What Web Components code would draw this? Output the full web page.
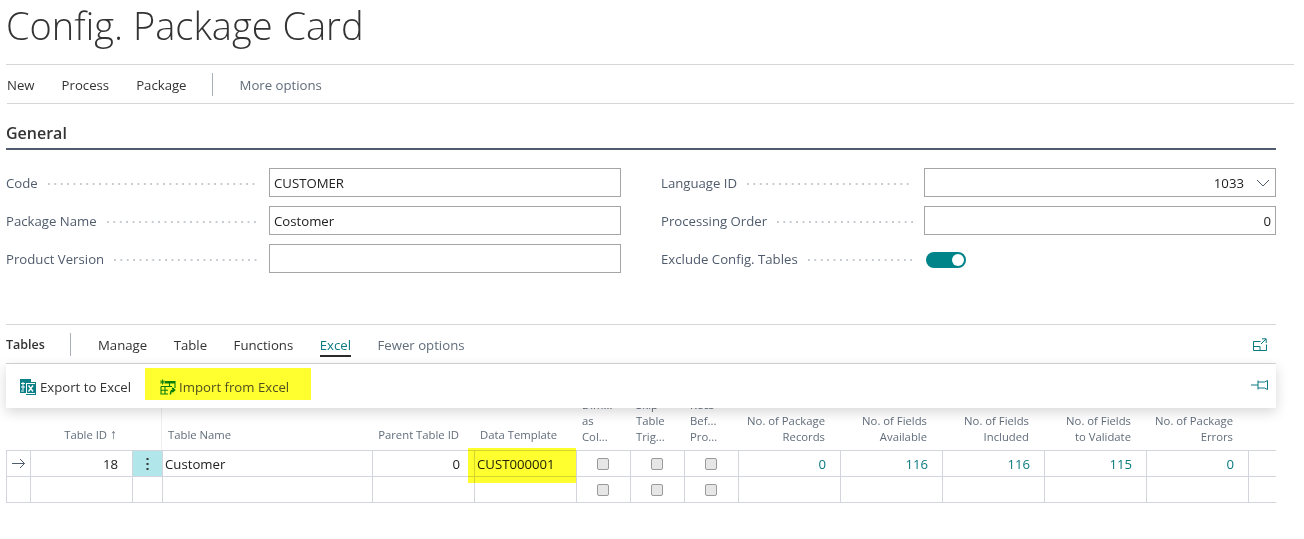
<!DOCTYPE html>
<html>
<head>
<meta charset="utf-8">
<title>Config. Package Card</title>
<style>
html, body { margin: 0; background: #fff; }
body { font-family: "Open Sans", "Liberation Sans", sans-serif; font-size: 13.2px; color: #212121; overflow: hidden; }
</style>
</head>
<body>
<pkg-title>Config. Package Card</pkg-title>
<action-bar>
    <span>New</span><span>Process</span><span class="end">Package</span><i></i><span class="more">More options</span>
</action-bar>
<general-section></general-section>
<tables-part></tables-part>

<script>
class PkgTitle extends HTMLElement {
    constructor() {
        super();
        this.shadow = this.attachShadow({mode:'open'});
        this.shadow.innerHTML = `
        <style>
            :host { display: block; height: 64px; margin: 0 10px 0 6px; border-bottom: 1px solid #d6d6da; }
            div { font-size: 38px; font-weight: 300; line-height: 51px; color: #333; }
        </style>
        <div><slot></slot></div>`;
    }
}

class ActionBar extends HTMLElement {
    constructor() {
        super();
        this.shadow = this.attachShadow({mode:'open'});
        this.shadow.innerHTML = `
        <style>
            :host { display: flex; align-items: center; height: 38px; margin: 0 10px 0 7px; border-bottom: 1px solid #d6d6da; color: #333; }
            ::slotted(span) { margin: 2px 27px 0 0; }
            ::slotted(.end) { margin-right: 25px; }
            ::slotted(i) { width: 1px; height: 23px; background: #a9b0ba; margin-right: 27px; }
            ::slotted(.more) { color: #616d7b; }
        </style>
        <slot></slot>`;
    }
}

class FieldRow extends HTMLElement {
    constructor() {
        super();
        this.shadow = this.attachShadow({mode:'open'});
        this.shadow.innerHTML = `
        <style>
            :host { display: flex; align-items: center; height: 29px; color: #505c6d; }
            .label { width: 263px; flex: none; display: flex; align-items: center; padding-right: 11px; box-sizing: border-box; white-space: nowrap; }
            .dots { flex: 1; height: 2px; margin: 2px 0 0 10px; background: radial-gradient(circle at 1px 1px, #c4c9cf 0.8px, transparent 1px) 0 0 / 6.4px 2px repeat-x; }
            .ctl { width: 352px; flex: none; }
        </style>
        <div class="label"><span>${this.getAttribute("label")}</span><div class="dots"></div></div>
        <div class="ctl"><slot></slot></div>`;
    }
}

class TextBox extends HTMLElement {
    constructor() {
        super();
        this.shadow = this.attachShadow({mode:'open'});
        let chevron = this.hasAttribute("select") ? `<svg width="14" height="8" viewBox="0 0 14 8"><path d="M1 1l6 6 6-6" fill="none" stroke="#505c6d" stroke-width="1"/></svg>` : "";
        this.shadow.innerHTML = `
        <style>
            :host { display: flex; align-items: center; gap: 12px; box-sizing: border-box; height: 29px; border: 1px solid #a5a5a5; padding: 0 4px; color: #212121; }
            :host([num]) { justify-content: flex-end; }
            :host([select]) { padding-right: 5px; }
        </style>
        <span><slot></slot></span>${chevron}`;
    }
}

class ToggleSwitch extends HTMLElement {
    constructor() {
        super();
        this.shadow = this.attachShadow({mode:'open'});
        this.shadow.innerHTML = `
        <style>
            :host { display: flex; justify-content: flex-end; align-items: center; box-sizing: border-box; width: 40px; height: 16px; margin: 2px 0 0 2px; border-radius: 8px; background: #00848a; padding-right: 2px; }
            div { width: 12px; height: 12px; border-radius: 50%; background: #fff; }
        </style>
        <div></div>`;
    }
}

class GeneralSection extends HTMLElement {
    constructor() {
        super();
        this.shadow = this.attachShadow({mode:'open'});
        this.shadow.innerHTML = `
        <style>
            :host { display: block; margin: 0 28px 0 6px; height: 220px; }
            h2 { margin: 0; height: 46px; box-sizing: border-box; border-bottom: 2px solid #505c6d; font-size: 16px; font-weight: 600; line-height: 58px; color: #333; }
            .cols { display: grid; grid-template-columns: 615px 615px; column-gap: 40px; row-gap: 9px; margin-top: 18px; }
        </style>
        <h2>General</h2>
        <div class="cols">
            <field-row label="Code"><text-box>CUSTOMER</text-box></field-row>
            <field-row label="Language ID"><text-box num select>1033</text-box></field-row>
            <field-row label="Package Name"><text-box>Costomer</text-box></field-row>
            <field-row label="Processing Order"><text-box num>0</text-box></field-row>
            <field-row label="Product Version"><text-box></text-box></field-row>
            <field-row label="Exclude Config. Tables"><toggle-switch></toggle-switch></field-row>
        </div>`;
    }
}

class GridRow extends HTMLElement {
    constructor() {
        super();
        this.shadow = this.attachShadow({mode:'open'});
        this.shadow.innerHTML = `
        <style>
            :host { display: grid; grid-template-columns: var(--cols); height: 26px; box-sizing: border-box; border-bottom: 1px solid #d3d5dc; border-left: 1px solid #d3d5dc; margin-left: -1px; }
            ::slotted(*) { box-sizing: border-box; border-right: 1px solid #d3d5dc; display: flex; align-items: center; padding: 0 4px 0 2px; min-width: 0; position: relative; }
            ::slotted(.num) { justify-content: flex-end; padding-right: 14px; }
            ::slotted(.link) { justify-content: flex-end; padding-right: 14px; color: #0b7a80; }
            ::slotted(.chk) { justify-content: center; padding: 0 2px 0 0; }
            ::slotted(.dots) { justify-content: center; background: #b1e6ea; padding: 0; }
            ::slotted(.last) { border-right: 0; }
            ::slotted(.mark) { padding-left: 4px; }
        </style>
        <slot></slot>`;
    }
}

class CheckBox extends HTMLElement {
    constructor() {
        super();
        this.shadow = this.attachShadow({mode:'open'});
        this.shadow.innerHTML = `
        <style>
            :host { display: block; box-sizing: border-box; width: 12px; height: 12px; border: 1px solid #9a9a9a; border-radius: 2px; background: #e6e6e6; }
        </style>`;
    }
}

class PkgGrid extends HTMLElement {
    constructor() {
        super();
        this.shadow = this.attachShadow({mode:'open'});
        this.shadow.innerHTML = `
        <style>
            :host { display: block; --cols: 24px 102px 30px 210px 102px 102px 54px 54px 54px 102px 102px 102px 102px 102px 28px; color: #212121; }
            .head { display: grid; grid-template-columns: var(--cols); grid-template-rows: 42px; height: 43px; overflow: hidden; border-bottom: 1px solid #d3d5dc; box-sizing: border-box; color: #616d7b; font-size: 11.3px; line-height: 16px; }
            .head div { display: flex; flex-direction: column; justify-content: flex-end; padding: 0 12px 5px 6px; box-sizing: border-box; white-space: nowrap; min-width: 0; height: 42px; }
            .head .r { align-items: flex-end; text-align: right; padding-right: 15px; padding-left: 0; }
            .head .one { padding-bottom: 7px; }
            .head .narrow { padding-left: 6px; padding-right: 0; }
            .head b { font-weight: 400; font-size: 14px; line-height: 14px; }
            .glow { position: absolute; top: -3px; left: 461px; width: 108px; height: 35px; background: #ffff30; mix-blend-mode: multiply; z-index: 1; pointer-events: none; }
        </style>
        <div class="head">
            <div></div>
            <div class="r one"><span>Table ID <b>↑</b></span></div>
            <div style="border-right:1px solid #eceef0"></div>
            <div class="one">Table Name</div>
            <div class="r one">Parent Table ID</div>
            <div class="one">Data Template</div>
            <div class="narrow"><span>Dim...</span><span>as</span><span>Col...</span></div>
            <div class="narrow"><span>Skip</span><span>Table</span><span>Trig...</span></div>
            <div class="narrow"><span>Recs</span><span>Bef...</span><span>Pro...</span></div>
            <div class="r"><span>No. of Package</span><span>Records</span></div>
            <div class="r"><span>No. of Fields</span><span>Available</span></div>
            <div class="r"><span>No. of Fields</span><span>Included</span></div>
            <div class="r"><span>No. of Fields</span><span>to Validate</span></div>
            <div class="r"><span>No. of Package</span><span>Errors</span></div>
            <div></div>
        </div>
        <div style="position:relative;margin-left:1px">
            <div class="glow"></div>
            <grid-row>
                <span class="mark"><svg width="15" height="11" viewBox="0 0 15 11"><path d="M1 5.5h12.5M9 1l4.5 4.5L9 10" fill="none" stroke="#505c6d" stroke-width="1"/></svg></span>
                <span class="num">18</span>
                <span class="dots"><svg width="3" height="14" viewBox="0 0 3 14"><path d="M0.5 1h2v2h-2zM0.5 6h2v2h-2zM0.5 11h2v2h-2z" fill="#333"/></svg></span>
                <span>Customer</span>
                <span class="num">0</span>
                <span>CUST000001</span>
                <span class="chk"><check-box></check-box></span>
                <span class="chk"><check-box></check-box></span>
                <span class="chk"><check-box></check-box></span>
                <span class="link">0</span>
                <span class="link">116</span>
                <span class="link">116</span>
                <span class="link">115</span>
                <span class="link">0</span>
                <span class="last"></span>
            </grid-row>
            <grid-row>
                <span></span><span></span><span></span><span></span><span></span><span></span>
                <span class="chk"><check-box></check-box></span>
                <span class="chk"><check-box></check-box></span>
                <span class="chk"><check-box></check-box></span>
                <span></span><span></span><span></span><span></span><span></span><span class="last"></span>
            </grid-row>
        </div>`;
    }
}

class TablesPart extends HTMLElement {
    constructor() {
        super();
        this.shadow = this.attachShadow({mode:'open'});
        this.shadow.innerHTML = `
        <style>
            :host { display: block; margin: 0 28px 0 6px; }
            .bar { display: flex; align-items: center; height: 40px; box-sizing: border-box; border-top: 1px solid #d6d6da; border-bottom: 1px solid #d6d6da; color: #333; }
            .bar b { font-size: 12.5px; font-weight: 600; color: #333; width: 64px; flex: none; }
            .bar i { width: 1px; height: 23px; background: #a9b0ba; margin-right: 27px; flex: none; }
            .bar span { margin: 2px 26.5px 0 0; line-height: 20px; }
            .bar .on { color: #0b7a80; border-bottom: 2px solid #2b2b2b; margin-top: 4px; }
            .bar .more { color: #616d7b; }
            .bar svg { margin-left: auto; margin-right: 9px; }
            .ribbon { display: flex; align-items: center; height: 44px; box-sizing: border-box; background: #fff; position: relative; z-index: 2; box-shadow: 0 4px 12px rgba(0,0,0,.16); padding: 0 7px 0 0; color: #333; }
            .btn { display: flex; align-items: center; gap: 4px; height: 32px; box-sizing: border-box; margin-top: -4px; padding-top: 6px; }
            .btn.one { padding-left: 14px; padding-right: 14px; }
            .btn.two { gap: 3px; padding-left: 15px; padding-right: 22px; background: #ffff30; color: #505020; }
            .pin { margin: -2px 0 0 auto; }
        </style>
        <div class="bar">
            <b>Tables</b><i></i>
            <span>Manage</span><span>Table</span><span>Functions</span><span class="on">Excel</span><span class="more">Fewer options</span>
            <svg width="14" height="13" viewBox="0 0 14 13"><path d="M.5 3.5h7M.5 3.5v9h13v-6M.5 8.5h6.5v4M8 6l5-5M9 .8h4.2V5" fill="none" stroke="#0b7a80" stroke-width="1"/></svg>
        </div>
        <div class="ribbon">
            <div class="btn one">
                <svg width="16" height="16" viewBox="0 0 16 16">
                    <path d="M0 0h11v3h5v13H6v-2H0z" fill="#0b7f86"/>
                    <path d="M6 4h9v11H6z" fill="#fff"/>
                    <path d="M7 5h8v9H7z" fill="#0b7f86"/>
                    <path d="M8.5 6.5l4.5 6M13 6.5l-4.5 6" stroke="#fff" stroke-width="1.3" fill="none"/>
                    <path d="M1 4.5h4M1 8h4M3 3v8M1 12h3" stroke="#fff" stroke-width="1" fill="none"/>
                </svg>
                <span>Export to Excel</span>
            </div>
            <div class="btn two">
                <svg width="16" height="16" viewBox="0 0 16 16" fill="none" stroke="#0c7c0c" stroke-width="1.1">
                    <path d="M5 2.5h10v6.5M1 7.5v7.5h7M1 7.5h11M5 7.5v7.5M1 11.2h7M9.5 2.5v5"/>
                    <path d="M2.5 .5v5M0 3h5M.8 1.3l3.4 3.4M4.2 1.3L.8 4.7" stroke-width=".9"/>
                    <path d="M10.5 15.5c0-3 .8-4.5 3-4.5M12.2 8.8l2.4 2.2-2.4 2.2" stroke-width="1.6"/>
                    <path d="M5 2h10v2.5H5z" fill="#0c7c0c" stroke="none"/>
                </svg>
                <span>Import from Excel</span>
            </div>
            <svg class="pin" width="18" height="12" viewBox="0 0 18 12" fill="none" stroke="#0b7a80" stroke-width="1"><path d="M0 6h7M7 1.5v9M7 3h6.5l3-1.5v9l-3-1.5H7"/></svg>
        </div>
        <pkg-grid></pkg-grid>`;
    }
}

customElements.define('pkg-title', PkgTitle);
customElements.define('action-bar', ActionBar);
customElements.define('field-row', FieldRow);
customElements.define('text-box', TextBox);
customElements.define('toggle-switch', ToggleSwitch);
customElements.define('general-section', GeneralSection);
customElements.define('grid-row', GridRow);
customElements.define('check-box', CheckBox);
customElements.define('pkg-grid', PkgGrid);
customElements.define('tables-part', TablesPart);
</script>
</body>
</html>
